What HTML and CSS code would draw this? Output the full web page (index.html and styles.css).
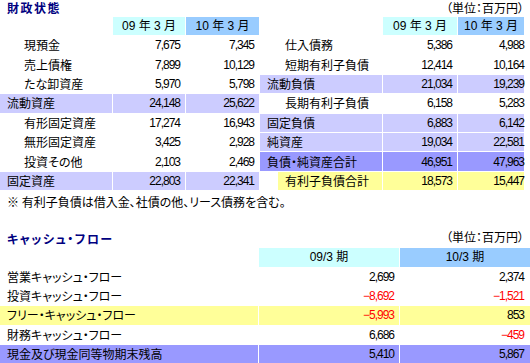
FILE: index.html
```html
<!DOCTYPE html>
<html lang="ja">
<head>
<meta charset="utf-8">
<title>財政状態</title>
<link rel="stylesheet" href="styles.css">
</head>
<body>
<div class="page">
  <div class="top-head">
    <h1 class="title">財政状態</h1>
    <span class="unit">（単位：百万円）</span>
  </div>
  <div class="bs">
    <div class="grid left">
      <div class="row head"><div class="c span2"></div><div class="c hd hd-a">09 年 3 月</div><div class="c hd hd-b">10 年 3 月</div></div>
      <div class="row"><div class="c"></div><div class="c lbl">現預金</div><div class="c num">7,675</div><div class="c num">7,345</div></div>
      <div class="row"><div class="c"></div><div class="c lbl">売上債権</div><div class="c num">7,899</div><div class="c num">10,129</div></div>
      <div class="row"><div class="c"></div><div class="c lbl">たな卸資産</div><div class="c num">5,970</div><div class="c num">5,798</div></div>
      <div class="row total"><div class="c lbl span2">流動資産</div><div class="c num">24,148</div><div class="c num">25,622</div></div>
      <div class="row"><div class="c"></div><div class="c lbl">有形固定資産</div><div class="c num">17,274</div><div class="c num">16,943</div></div>
      <div class="row"><div class="c"></div><div class="c lbl">無形固定資産</div><div class="c num">3,425</div><div class="c num">2,928</div></div>
      <div class="row"><div class="c"></div><div class="c lbl">投資その他</div><div class="c num">2,103</div><div class="c num">2,469</div></div>
      <div class="row total"><div class="c lbl span2">固定資産</div><div class="c num">22,803</div><div class="c num">22,341</div></div>
    </div>
    <div class="grid right">
      <div class="row head"><div class="c span2"></div><div class="c hd hd-a">09 年 3 月</div><div class="c hd hd-b">10 年 3 月</div></div>
      <div class="row"><div class="c"></div><div class="c lbl">仕入債務</div><div class="c num">5,386</div><div class="c num">4,988</div></div>
      <div class="row"><div class="c"></div><div class="c lbl">短期有利子負債</div><div class="c num">12,414</div><div class="c num">10,164</div></div>
      <div class="row total"><div class="c lbl span2">流動負債</div><div class="c num">21,034</div><div class="c num">19,239</div></div>
      <div class="row"><div class="c"></div><div class="c lbl">長期有利子負債</div><div class="c num">6,158</div><div class="c num">5,283</div></div>
      <div class="row total"><div class="c lbl span2">固定負債</div><div class="c num">6,883</div><div class="c num">6,142</div></div>
      <div class="row total"><div class="c lbl span2">純資産</div><div class="c num">19,034</div><div class="c num">22,581</div></div>
      <div class="row grand"><div class="c lbl span2">負債・純資産合計</div><div class="c num">46,951</div><div class="c num">47,963</div></div>
      <div class="row yellow"><div class="c blank"></div><div class="c lbl">有利子負債合計</div><div class="c num">18,573</div><div class="c num">15,447</div></div>
    </div>
  </div>
  <p class="note">※ 有利子負債は借入金、社債の他、リース債務を含む。</p>

  <div class="cf-head">
    <h2 class="title">キャッシュ・フロー</h2>
    <span class="unit">（単位：百万円）</span>
  </div>
  <div class="grid cf">
    <div class="row head"><div class="c"></div><div class="c hd hd-a">09/3 期</div><div class="c hd hd-b">10/3 期</div></div>
    <div class="row"><div class="c lbl">営業キャッシュ・フロー</div><div class="c num">2,699</div><div class="c num">2,374</div></div>
    <div class="row"><div class="c lbl">投資キャッシュ・フロー</div><div class="c num neg">−8,692</div><div class="c num neg">−1,521</div></div>
    <div class="row yellow"><div class="c lbl">フリー・キャッシュ・フロー</div><div class="c num neg">−5,993</div><div class="c num">853</div></div>
    <div class="row"><div class="c lbl">財務キャッシュ・フロー</div><div class="c num">6,686</div><div class="c num neg">−459</div></div>
    <div class="row grand"><div class="c lbl">現金及び現金同等物期末残高</div><div class="c num">5,410</div><div class="c num">5,867</div></div>
  </div>
</div>
</body>
</html>
```
FILE: styles.css
```css
body {
  margin: 0;
  background: #ffffff;
  color: #000000;
  font-family: "Noto Sans CJK JP", sans-serif;
  font-size: 12px;
  font-feature-settings: "palt";
}

.page {
  width: 530px;
}

.top-head {
  width: 524px;
  height: 17px;
  display: flex;
  justify-content: space-between;
  align-items: flex-start;
}

.title {
  margin: 0;
  padding-left: 7px;
  font-size: 12px;
  font-weight: bold;
  color: #000080;
  letter-spacing: 1.5px;
  line-height: 16px;
}

.unit {
  line-height: 14px;
}

.top-head .unit {
  padding-top: 1px;
}

.bs {
  display: flex;
  gap: 1px;
}

.grid {
  display: grid;
  gap: 1px;
  grid-template-rows: 18px;
  grid-auto-rows: 18.4px;
}

.left {
  grid-template-columns: 16px 95px 72px 73px;
}

.right {
  grid-template-columns: 17px 104px 74px 66px;
}

.cf {
  grid-template-columns: 258px 140px 130px;
  grid-template-rows: 18.4px;
}

.row {
  display: contents;
}

.c {
  display: flex;
  align-items: center;
  line-height: 14px;
  white-space: nowrap;
}

.span2 {
  grid-column: span 2;
}

.lbl {
  padding-left: 7px;
}

.num {
  justify-content: flex-end;
  padding-right: 5px;
  font-family: "Liberation Sans", sans-serif;
  letter-spacing: -1px;
}

.right .num:last-child {
  padding-right: 0;
}

.cf .num:last-child {
  padding-right: 6px;
}

.hd {
  justify-content: center;
  font-family: "Liberation Sans", "Noto Sans CJK JP", sans-serif;
}

.hd-a {
  background: #ccffff;
}

.hd-b {
  background: #99ccff;
}

.total > .c {
  background: #ccccff;
}

.grand > .c {
  background: #9999ff;
}

.yellow > .c {
  background: #ffff99;
}

.yellow > .blank {
  background: transparent;
}

.neg {
  color: #ff0000;
}

.note {
  margin: 0;
  padding: 2px 0 0 7px;
  height: 20px;
  line-height: 20px;
}

.cf-head {
  width: 524px;
  height: 36px;
  display: flex;
  justify-content: space-between;
  align-items: flex-end;
  padding-bottom: 1px;
  box-sizing: border-box;
}

.cf-head .unit {
  line-height: 16px;
  padding-bottom: 2px;
}
```
